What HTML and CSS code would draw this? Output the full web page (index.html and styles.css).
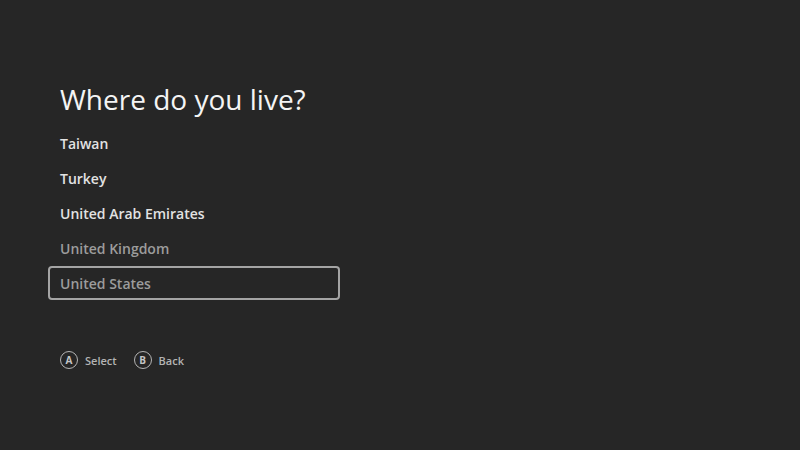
FILE: index.html
```html
<!DOCTYPE html>
<html lang="en">
<head>
<meta charset="utf-8">
<title>Where do you live?</title>
<link rel="stylesheet" href="styles.css">
</head>
<body>
<main class="screen">
  <h1 class="title">Where do you live?</h1>
  <ul class="list">
    <li class="item">Taiwan</li>
    <li class="item">Turkey</li>
    <li class="item">United Arab Emirates</li>
    <li class="item dim">United Kingdom</li>
    <li class="item dim focused">United States</li>
  </ul>
  <div class="hints">
    <div class="hint"><span class="btn">A</span><span class="label">Select</span></div>
    <div class="hint"><span class="btn">B</span><span class="label">Back</span></div>
  </div>
</main>
</body>
</html>
```
FILE: styles.css
```css
html, body {
  margin: 0;
  padding: 0;
  background: #262626;
}
.screen {
  width: 800px;
  height: 450px;
  box-sizing: border-box;
  padding: 81px 0 0 60px;
  font-family: "Open Sans", "Noto Sans", sans-serif;
  color: #ececec;
}
.title {
  margin: 0;
  font-size: 28px;
  font-weight: 400;
  line-height: 36px;
  color: #f4f4f4;
}
.list {
  list-style: none;
  margin: 9px 0 0 -12px;
  padding: 0;
  display: flex;
  flex-direction: column;
  gap: 1px;
  width: 292px;
}
.item {
  height: 34px;
  box-sizing: border-box;
  padding-left: 12px;
  display: flex;
  align-items: center;
  font-size: 14px;
  font-weight: 600;
  color: #e2e2e2;
}
.item.dim {
  color: #9c9c9c;
}
.item.focused {
  border: 2px solid #a4a4a4;
  border-radius: 4px;
  padding-left: 10px;
}
.hints {
  display: flex;
  gap: 17px;
  margin-top: 51px;
}
.hint {
  display: flex;
  align-items: center;
  gap: 7px;
}
.btn {
  width: 18px;
  height: 18px;
  box-sizing: border-box;
  border: 1.5px solid #b4b4b4;
  border-radius: 50%;
  display: flex;
  align-items: center;
  justify-content: center;
  font-size: 10px;
  font-weight: 700;
  color: #c4c4c4;
}
.label {
  font-size: 11px;
  font-weight: 600;
  color: #b4b4b4;
}
```
